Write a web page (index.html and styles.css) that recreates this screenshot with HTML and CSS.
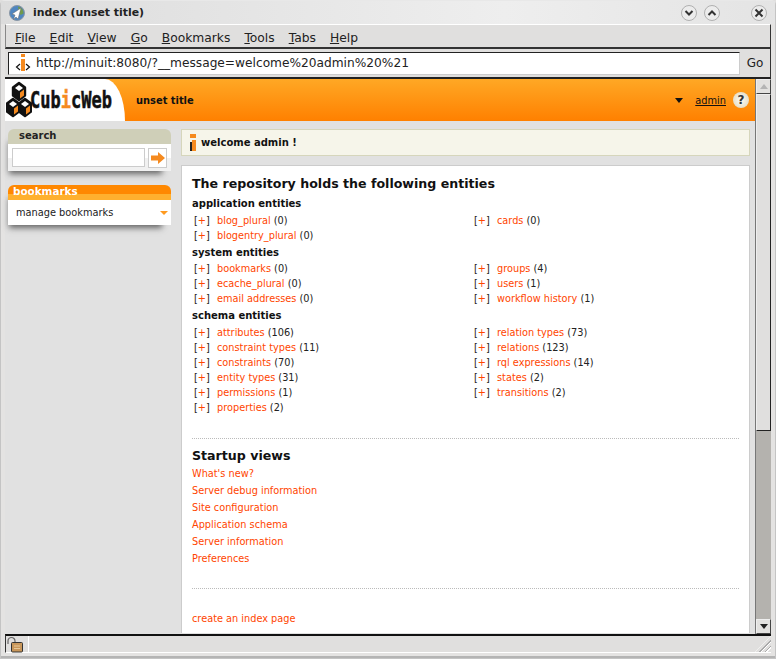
FILE: index.html
```html
<!DOCTYPE html>
<html>
<head>
    <title>index (unset title)</title>
    <link rel="stylesheet" href="styles.css">
</head>
<body>
<div class="window">
    <div class="titlebar">
        <svg class="appicon" width="16" height="16" viewBox="0 0 16 16">
            <circle cx="8" cy="8" r="7.500" fill="#4f86c0" stroke="#8a97a5"/>
            <path d="M9 1.500a6.500 6.500 0 0 1 5.500 7l-3 1.500-1.500-3z" fill="#6f9a4a"/>
            <path d="M12 3 3 9l3 1-1.500 4.500L7 12l2 2z" fill="#fff" stroke="#666" stroke-width=".5"/>
        </svg>
        <span class="wintitle">index (unset title)</span>
        <span class="winbtn winbtn-down">
            <svg width="10" height="8" viewBox="0 0 10 8"><path d="M1.500 2 5 5.500 8.500 2" fill="none" stroke="#333" stroke-width="2"/></svg>
        </span>
        <span class="winbtn winbtn-up">
            <svg width="10" height="8" viewBox="0 0 10 8"><path d="M1.500 6 5 2.500 8.500 6" fill="none" stroke="#333" stroke-width="2"/></svg>
        </span>
        <span class="winbtn winbtn-close">
            <svg width="10" height="10" viewBox="0 0 10 10"><path d="M1.500 1.500l7 7m0-7l-7 7" fill="none" stroke="#333" stroke-width="2"/></svg>
        </span>
    </div>

    <div class="menubar">
        <span><u>F</u>ile</span>
        <span><u>E</u>dit</span>
        <span><u>V</u>iew</span>
        <span><u>G</u>o</span>
        <span><u>B</u>ookmarks</span>
        <span><u>T</u>ools</span>
        <span><u>T</u>abs</span>
        <span><u>H</u>elp</span>
    </div>

    <div class="addressbar">
        <div class="urlfield">
            <svg class="favicon" width="16" height="18" viewBox="0 0 16 18">
                <rect x="6" y="0" width="4" height="3" fill="#f58a1f"/>
                <rect x="6" y="5" width="4" height="12" fill="#f58a1f"/>
                <path d="M5 10 1.500 13 5 16M11 10l3.500 3L11 16" fill="none" stroke="#111" stroke-width="1.200"/>
            </svg>
            <span>http://minuit:8080/?__message=welcome%20admin%20%21</span>
        </div>
        <div class="gobtn">Go</div>
    </div>

    <div class="viewport">
        <div class="page">
            <div class="pageheader">
                <div class="logo">
                    <svg width="26" height="38" viewBox="0 0 26 38">
                        <g stroke="#111" stroke-width="2.400" stroke-linejoin="round">
                            <path d="M13 2l6 4.500v8l-6 4.500-6-4.500v-8z" fill="#111"/>
                            <path d="M7 18l6 4.500v8L7 35l-6-4.500v-8z" fill="#111"/>
                            <path d="M19 18l6 4.500v8L19 35l-6-4.500v-8z" fill="#111"/>
                        </g>
                        <g fill="#fff">
                            <path d="M13 4l4 3-4 3-4-3z"/>
                            <path d="M7 20l4 3-4 3-4-3z"/>
                            <path d="M19 20l4 3-4 3-4-3z"/>
                        </g>
                        <g fill="#f58a1f">
                            <path d="M14 11.500l4-3v6l-4 3z"/>
                            <path d="M8 27.500l4-3v6l-4 3z"/>
                            <path d="M20 27.500l4-3v6l-4 3z"/>
                        </g>
                    </svg>
                    <span class="logotext">Cub<span class="logoi">i</span>cWeb</span>
                </div>
                <span class="sitetitle">unset title</span>
                <span class="usermenu">
                    <span class="caret"></span>
                    <a href="#">admin</a>
                    <span class="helpicon">?</span>
                </span>
            </div>

            <div class="columns">
                <div class="sidebar">
                    <div class="sidebox">
                        <div class="search-title">search</div>
                        <div class="search-body">
                            <input class="search-input" type="text">
                            <span class="search-go">
                                <svg width="16" height="12" viewBox="0 0 16 12"><path d="M1 3.500h7V0l7 6-7 6V8.500H1z" fill="#f58a1f"/></svg>
                            </span>
                        </div>
                    </div>
                    <div class="sidebox">
                        <div class="book-title">bookmarks</div>
                        <div class="book-body">
                            <span>manage bookmarks</span>
                            <span class="book-caret"></span>
                        </div>
                    </div>
                </div>

                <div class="content">
                    <div class="message">
                        <svg width="8" height="17" viewBox="0 0 8 17">
                            <rect x="1" y="0" width="6" height="4" fill="#f58a1f"/>
                            <rect x="3" y="6" width="4" height="11" fill="#f58a1f"/>
                            <rect x="1" y="8" width="2" height="9" fill="#222"/>
                        </svg>
                        <b>welcome admin !</b>
                    </div>

                    <div class="mainbox">
                        <h1 class="repo">The repository holds the following entities</h1>

                        <h4>application entities</h4>
                        <div class="entities">
                            <div><span class="add">[<i>+</i>]</span><a href="#">blog_plural</a> (0)</div>
                            <div><span class="add">[<i>+</i>]</span><a href="#">cards</a> (0)</div>
                            <div><span class="add">[<i>+</i>]</span><a href="#">blogentry_plural</a> (0)</div>
                        </div>

                        <h4>system entities</h4>
                        <div class="entities entities-tight">
                            <div><span class="add">[<i>+</i>]</span><a href="#">bookmarks</a> (0)</div>
                            <div><span class="add">[<i>+</i>]</span><a href="#">groups</a> (4)</div>
                            <div><span class="add">[<i>+</i>]</span><a href="#">ecache_plural</a> (0)</div>
                            <div><span class="add">[<i>+</i>]</span><a href="#">users</a> (1)</div>
                            <div><span class="add">[<i>+</i>]</span><a href="#">email addresses</a> (0)</div>
                            <div><span class="add">[<i>+</i>]</span><a href="#">workflow history</a> (1)</div>
                        </div>

                        <h4>schema entities</h4>
                        <div class="entities">
                            <div><span class="add">[<i>+</i>]</span><a href="#">attributes</a> (106)</div>
                            <div><span class="add">[<i>+</i>]</span><a href="#">relation types</a> (73)</div>
                            <div><span class="add">[<i>+</i>]</span><a href="#">constraint types</a> (11)</div>
                            <div><span class="add">[<i>+</i>]</span><a href="#">relations</a> (123)</div>
                            <div><span class="add">[<i>+</i>]</span><a href="#">constraints</a> (70)</div>
                            <div><span class="add">[<i>+</i>]</span><a href="#">rql expressions</a> (14)</div>
                            <div><span class="add">[<i>+</i>]</span><a href="#">entity types</a> (31)</div>
                            <div><span class="add">[<i>+</i>]</span><a href="#">states</a> (2)</div>
                            <div><span class="add">[<i>+</i>]</span><a href="#">permissions</a> (1)</div>
                            <div><span class="add">[<i>+</i>]</span><a href="#">transitions</a> (2)</div>
                            <div><span class="add">[<i>+</i>]</span><a href="#">properties</a> (2)</div>
                        </div>

                        <hr class="sep-first">

                        <h1 class="startup">Startup views</h1>
                        <ul class="views">
                            <li><a href="#">What's new?</a></li>
                            <li><a href="#">Server debug information</a></li>
                            <li><a href="#">Site configuration</a></li>
                            <li><a href="#">Application schema</a></li>
                            <li><a href="#">Server information</a></li>
                            <li><a href="#">Preferences</a></li>
                        </ul>

                        <hr class="sep-second">

                        <a class="create" href="#">create an index page</a>
                    </div>
                </div>
            </div>
        </div>

        <div class="scrollbar">
            <div class="sb-up"><span class="tri-up"></span></div>
            <div class="sb-thumb"></div>
            <div class="sb-track"></div>
            <div class="sb-down"><span class="tri-down"></span></div>
        </div>
    </div>

    <div class="statusbar">
        <div class="lockcell">
            <svg width="18" height="17" viewBox="0 0 18 17">
                <path d="M2 8V5a3.500 3.500 0 0 1 7 0v2" fill="none" stroke="#666" stroke-width="1.200"/>
                <rect x="5.500" y="6.500" width="11" height="9.500" rx="1" fill="#c8965a" stroke="#333"/>
                <path d="M8 10h6M8 12.500h6" stroke="#e8c898"/>
            </svg>
        </div>
        <div class="grip"></div>
    </div>
</div>
</body>
</html>
```

FILE: styles.css
```css
* {
    box-sizing: border-box;
}
html, body {
    margin: 0;
    height: 100%;
    overflow: hidden;
}
body {
    font-family: "DejaVu Sans", sans-serif;
    background: #e0dfde;
}
a {
    color: #ff4500;
    text-decoration: none;
}

/* window chrome */
.window {
    width: 776px;
    height: 659px;
    display: flex;
    flex-direction: column;
    padding: 0 4px 5px 4px;
    background: #e4e3e2;
    border: 1px solid #c4c4c4;
    border-top-color: #e8e8e8;
    border-radius: 5px 5px 0 0;
    box-shadow: inset 0 -2px 0 #b4b4b4;
}
.titlebar {
    height: 23px;
    flex: none;
    display: flex;
    align-items: center;
    margin: 0 -4px;
    padding: 0 8px;
    background: linear-gradient(to right, #dcdcdc, #eeeeee 65%, #e4e4e4);
}
.appicon {
    margin-right: 8px;
}
.wintitle {
    flex: 1;
    font-size: 10.900px;
    font-weight: bold;
    color: #222;
}
.winbtn {
    width: 16px;
    height: 16px;
    display: flex;
    align-items: center;
    justify-content: center;
    border: 1px solid #b0b0b0;
    border-radius: 50%;
    background: #ececec;
}
.winbtn-down {
    margin-right: 7px;
}
.winbtn-up {
    margin-right: 31px;
}
.menubar {
    height: 25px;
    flex: none;
    display: flex;
    align-items: center;
    padding: 3px 0 0 9px;
    gap: 14px;
    font-size: 12.300px;
    color: #222;
    background: #e0dfde;
    border-top: 1px solid #fff;
    border-left: 1px solid #888;
    border-right: 1px solid #333;
    border-bottom: 2px solid #333;
}
.addressbar {
    height: 30px;
    flex: none;
    display: flex;
    align-items: center;
    padding: 2px 0 2px 3px;
    background: #e0dfde;
    border-right: 1px solid #333;
    border-bottom: 2px solid #222;
}
.urlfield {
    flex: 1;
    height: 23px;
    display: flex;
    align-items: center;
    gap: 5px;
    padding-left: 6px;
    font-size: 12.200px;
    color: #222;
    background: #fff;
    border: 1px solid #222;
    border-right-color: #ccc;
    border-bottom-color: #ccc;
}
.gobtn {
    width: 30px;
    text-align: center;
    font-size: 12px;
    color: #222;
}

/* page and scrollbar */
.viewport {
    flex: 1;
    min-height: 0;
    display: flex;
}
.page {
    flex: 1;
    min-width: 0;
    background: #e1e1e1;
}
.pageheader {
    height: 42px;
    display: flex;
    align-items: center;
    background: linear-gradient(#ffa825, #ff8000);
}
.logo {
    width: 120px;
    height: 42px;
    display: flex;
    align-items: center;
    padding-left: 1px;
    background: #fff;
    border-radius: 0 20px 0 0 / 0 42px 0 0;
}
.logotext {
    margin-left: -2px;
    font-family: "DejaVu Sans Mono", monospace;
    font-size: 17px;
    font-weight: bold;
    color: #111;
    transform: scaleY(1.300);
    -webkit-text-stroke: .4px #111;
}
.logoi {
    color: #f58a1f;
    -webkit-text-stroke: .4px #f58a1f;
}
.sitetitle {
    flex: 1;
    margin-left: 11px;
    font-size: 9.900px;
    font-weight: bold;
    color: #111;
}
.usermenu {
    display: flex;
    align-items: center;
    margin-right: 6px;
    font-size: 9.800px;
}
.usermenu a {
    color: #111;
    text-decoration: underline;
}
.caret {
    width: 0;
    height: 0;
    margin-right: 12px;
    border: 4px solid transparent;
    border-top: 5px solid #111;
    border-bottom: 0;
}
.helpicon {
    width: 16px;
    height: 16px;
    margin-left: 7px;
    border-radius: 50%;
    background: radial-gradient(#fffdf5, #ddd3b8);
    color: #333;
    font-size: 12px;
    font-weight: bold;
    line-height: 16px;
    text-align: center;
}
.columns {
    display: flex;
    height: 512px;
    padding-top: 8px;
}

/* left column */
.sidebar {
    width: 176px;
    flex: none;
    padding-left: 3px;
}
.sidebox {
    width: 163px;
    margin-bottom: 14px;
    box-shadow: -4px 8px 6px -5px #666;
}
.search-title {
    height: 15px;
    padding-left: 11px;
    font-size: 10px;
    font-weight: bold;
    line-height: 14px;
    color: #222;
    background: #cfcfb8;
    border-radius: 6px 6px 0 0;
}
.search-body {
    height: 27px;
    display: flex;
    align-items: center;
    padding: 0 4px;
    background: linear-gradient(#fff 14px, #f1f1f1 14px);
}
.search-input {
    width: 133px;
    height: 19px;
    border: 1px solid #ccc;
    background: #fff;
}
.search-go {
    width: 20px;
    height: 20px;
    margin-left: 3px;
    display: flex;
    align-items: center;
    justify-content: center;
    background: #fff;
    border: 1px solid #ccc;
}
.book-title {
    height: 15px;
    padding-left: 5px;
    font-size: 10.400px;
    font-weight: bold;
    line-height: 13px;
    color: #fff;
    background: linear-gradient(#ff8800 9px, #ffb02e 9px);
    border-radius: 6px 6px 0 0;
}
.book-body {
    height: 25px;
    display: flex;
    align-items: center;
    justify-content: space-between;
    padding: 0 3px 0 8px;
    font-size: 9.800px;
    color: #222;
    background: #fff;
}
.book-caret {
    width: 0;
    height: 0;
    border: 4px solid transparent;
    border-top: 4px solid #ff9a1f;
    border-bottom: 0;
}

/* right column */
.content {
    flex: 1;
    min-width: 0;
    padding-right: 5px;
    display: flex;
    flex-direction: column;
}
.message {
    height: 27px;
    flex: none;
    display: flex;
    align-items: center;
    gap: 4px;
    padding-left: 7px;
    margin-bottom: 9px;
    font-size: 10px;
    color: #111;
    background: #f6f5ea;
    border: 1px solid #d6d6bc;
}
.mainbox {
    flex: 1;
    padding: 9px 10px 0;
    font-size: 9.750px;
    color: #222;
    background: #fff;
    border: 1px solid #ccc;
    border-bottom: 0;
}
h1 {
    margin: 0;
    font-size: 12.600px;
    line-height: 17px;
    font-weight: bold;
    color: #111;
}
h1.repo {
    margin-bottom: 3px;
}
h4 {
    margin: 0;
    font-size: 10px;
    line-height: 17px;
    font-weight: bold;
    color: #111;
}
.entities {
    display: grid;
    grid-template-columns: 280px 1fr;
    grid-auto-rows: 15px;
    padding: 1px 0 1px 2px;
    line-height: 15px;
}
.entities-tight {
    padding-top: 0;
}
.add {
    display: inline-block;
    width: 23px;
}
.add i {
    font-style: normal;
    color: #ff4500;
}
hr {
    border: 0;
    border-top: 1px dotted #bbb;
    margin: 0;
}
.sep-first {
    margin-top: 22px;
}
.startup {
    margin-top: 8px;
}
.views {
    list-style: none;
    margin: 1px 0 0;
    padding: 0;
    line-height: 17px;
}
.sep-second {
    margin-top: 21px;
}
.create {
    display: block;
    margin-top: 24px;
}

/* scrollbar */
.scrollbar {
    width: 16px;
    flex: none;
    display: flex;
    flex-direction: column;
    background: #b4b2ae;
    border-left: 1px solid #777;
}
.sb-up, .sb-down {
    height: 15px;
    flex: none;
    display: flex;
    align-items: center;
    justify-content: center;
    background: #e2e1df;
    border: 1px solid #444;
    border-top-color: #eee;
    border-left-color: #eee;
}
.sb-thumb {
    height: 337px;
    flex: none;
    background: #e0dfde;
    border: 1px solid #222;
    border-top-color: #eee;
    border-left-color: #eee;
}
.sb-track {
    flex: 1;
}
.tri-up {
    border: 4px solid transparent;
    border-bottom: 5px solid #b4b4b4;
    border-top: 0;
}
.tri-down {
    border: 4px solid transparent;
    border-top: 5px solid #222;
    border-bottom: 0;
}

/* status bar */
.statusbar {
    height: 19px;
    flex: none;
    display: flex;
    background: #e0dfde;
    border-top: 2px solid #111;
    border-left: 1px solid #333;
    border-bottom: 1px solid #fff;
}
.lockcell {
    width: 23px;
    border-right: 1px solid #fff;
}
.grip {
    margin-left: auto;
    width: 16px;
    background: repeating-linear-gradient(135deg, transparent 0 2px, #aaa 2px 3px, #fff 3px 4px);
    clip-path: polygon(100% 0, 100% 100%, 0 100%);
}
```
